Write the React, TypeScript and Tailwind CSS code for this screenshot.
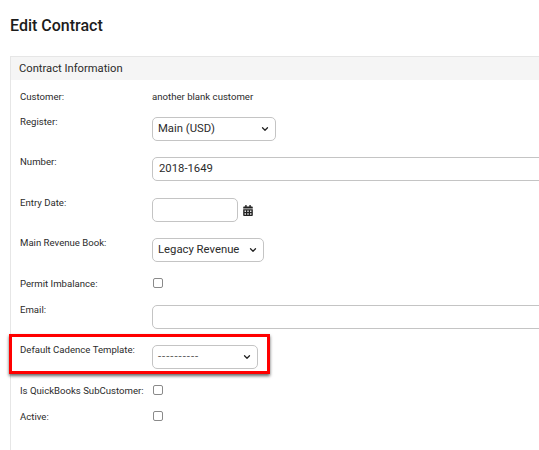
import { ChevronDown } from 'lucide-react'
import { FaCalendarAlt } from 'react-icons/fa'
import type { ReactNode } from 'react'

function Row({ label, children, className }: { label: string; children?: ReactNode; className?: string }) {
  return (
    <div className={`flex items-start ${className ?? ''}`}>
      <label className="mt-[1px] w-[132px] shrink-0 whitespace-nowrap text-[9.6px] leading-[14px] text-[#2b2b2b]">{label}</label>
      {children}
    </div>
  )
}

function Select({ value, className, valueClass }: { value: string; className: string; valueClass?: string }) {
  return (
    <div className={`flex h-[24px] items-center justify-between whitespace-nowrap rounded-[5px] border border-[#c4c4c4] bg-white pl-[5px] pr-[5px] text-[11.3px] text-[#2b2b2b] ${className}`}>
      <span className={valueClass}>{value}</span>
      <ChevronDown className="h-[10px] w-[10px] text-[#222]" strokeWidth={3} />
    </div>
  )
}

function Checkbox() {
  return <span className="ml-[1px] mt-[2px] block h-[10px] w-[10px] rounded-[2px] border border-[#8a8a8a] bg-white" />
}

export default function App() {
  return (
    <div className="relative h-[450px] w-[539px] overflow-hidden bg-white font-['Roboto',sans-serif]">
      <h1 className="pl-[10px] pt-[16px] text-[16px] font-medium leading-[20px] text-[#1c1c1c]">Edit Contract</h1>
      <div className="ml-[10px] mt-[20px] h-[400px] border-l border-t border-[#e6e6e6]">
        <div className="flex h-[23px] items-center bg-[#f5f5f5] pl-[8px] pt-[1px] text-[11.2px] text-[#2b2b2b]">Contract Information</div>
        <div className="pl-[9px] pt-[9px]">
          <Row label="Customer:" className="h-[25px]">
            <span className="mt-[1px] text-[9.6px] leading-[14px] text-[#2b2b2b]">another blank customer</span>
          </Row>
          <Row label="Register:" className="h-[40px]">
            <Select value="Main (USD)" className="mt-[3px] w-[124px]" />
          </Row>
          <Row label="Number:" className="h-[41px]">
            <div className="mt-[3px] flex h-[24px] w-[420px] shrink-0 items-center rounded-[5px] border border-[#c4c4c4] pl-[6px] pt-[1px] text-[11.3px] text-[#2b2b2b]">2018-1649</div>
          </Row>
          <Row label="Entry Date:" className="h-[40px]">
            <div className="mt-[3px] flex items-center">
              <div className="h-[24px] w-[86px] rounded-[5px] border border-[#c4c4c4]" />
              <FaCalendarAlt className="ml-[5px] h-[11px] w-[10px] text-[#222]" />
            </div>
          </Row>
          <Row label="Main Revenue Book:" className="h-[41px]">
            <Select value="Legacy Revenue" className="mt-[3px] w-[112px]" />
          </Row>
          <Row label="Permit Imbalance:" className="h-[26px]">
            <Checkbox />
          </Row>
          <Row label="Email:" className="h-[40px]">
            <div className="mt-[3px] h-[24px] w-[420px] shrink-0 rounded-[5px] border border-[#c4c4c4]" />
          </Row>
          <Row label="Default Cadence Template:" className="h-[41px]">
            <Select value="----------" valueClass="tracking-[1px] text-[#555]" className="mt-[3px] w-[106px]" />
          </Row>
          <Row label="Is QuickBooks SubCustomer:" className="h-[26px]">
            <Checkbox />
          </Row>
          <Row label="Active:">
            <Checkbox />
          </Row>
        </div>
      </div>
      <div className="absolute left-[9px] top-[334px] h-[40px] w-[261px] border-[3px] border-[#ff0000] shadow-[0_2px_3px_rgba(0,0,0,0.6)]" />
    </div>
  )
}
